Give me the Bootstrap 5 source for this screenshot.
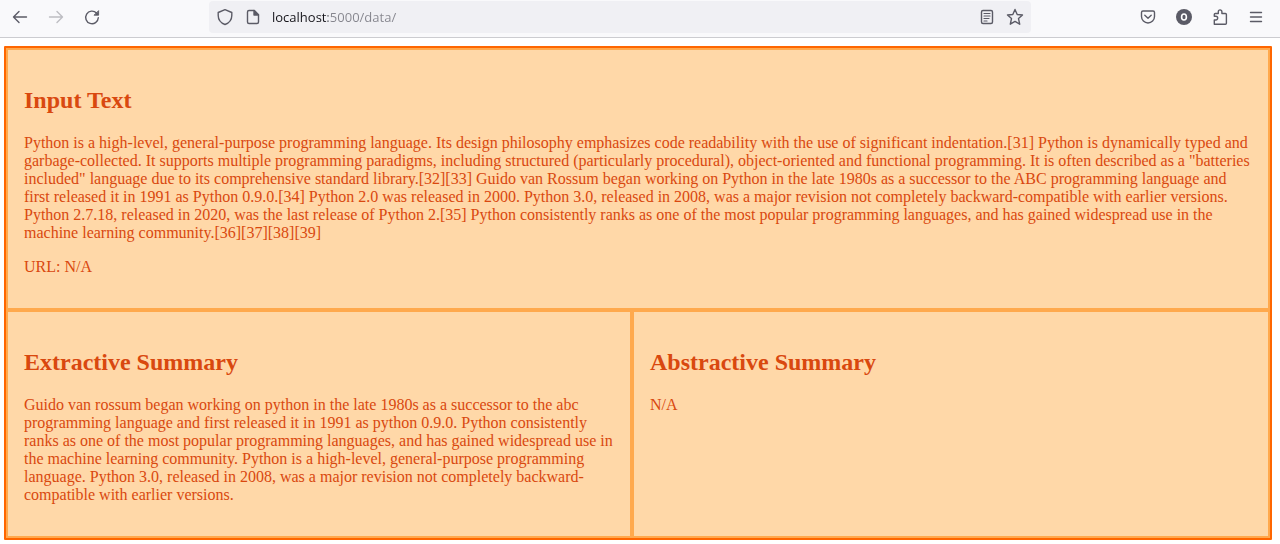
<!DOCTYPE html>
<html lang="en">
<head>
<meta charset="utf-8">
<meta name="viewport" content="width=device-width, initial-scale=1">
<title>Summary data</title>
<link href="https://cdn.jsdelivr.net/npm/bootstrap@5.3.0/dist/css/bootstrap.min.css" rel="stylesheet">
<style>
  body { background: #fff; }
  .toolbar { height: 38px; background: #f9f9fb; border-bottom: 1px solid #ccccd0; padding: 0 15px 3px 11px; }
  .tool { width: 18px; height: 18px; padding: 0; border: 0; background: none; color: #5b5b66; display: flex; flex: none; }
  .tool:disabled { color: #bdbdc2; }
  .tool svg { width: 18px; height: 18px; fill: none; stroke: currentColor; stroke-width: 1.4; stroke-linecap: round; stroke-linejoin: round; }
  .tool-group { gap: 18px; }
  .address { width: 822px; height: 32px; background: #f0f0f4; border-radius: 4px; padding: 0 7px; gap: 10px; }
  /* host in black, port and path in grey */
  .address-input { border: 0; outline: 0; padding: 0; min-width: 0; font: 13px/20px "Open Sans", sans-serif;
    background: linear-gradient(90deg, #15141a 56px, #85858d 56px); -webkit-background-clip: text; background-clip: text; color: transparent; }
  .panels { grid-template-columns: 313fr 319fr; margin: 8px 8px 4px 4px; border: 2px solid #ff6600; border-radius: 1px; background: #ffd8a8;
    color: #d9480f; font: 16px/18px "Liberation Serif", serif; }
  .panel { border: 2px solid #ffa94d; padding: 16px; }
  .panel-wide { grid-column: 1 / -1; }
  .panel h2 { font-size: 24px; line-height: 28px; font-weight: 700; margin: 20px 0; }
  .panel p { margin: 0 0 16px; }
</style>
</head>
<body>
<header class="toolbar d-flex align-items-center justify-content-between">
  <nav class="tool-group d-flex" aria-label="History">
    <button class="tool" type="button" aria-label="Back"><svg viewBox="0 0 18 18"><path d="M15.500 9H2.500M8 3.500 2.500 9 8 14.500"/></svg></button>
    <button class="tool" type="button" aria-label="Forward" disabled><svg viewBox="0 0 18 18"><path d="M2.500 9h13M10 3.500 15.500 9 10 14.500"/></svg></button>
    <button class="tool" type="button" aria-label="Reload"><svg viewBox="0 0 18 18"><path d="M13.500 5A6.300 6.300 0 1 0 15.300 9.800"/><path d="M15.600 3v4.200h-4.200z" fill="currentColor" stroke-width=".9"/></svg></button>
  </nav>
  <div class="address d-flex align-items-center">
    <button class="tool" type="button" aria-label="Site protection"><svg viewBox="0 0 18 18"><path d="M9 1.700 15.800 4.500v3c0 4-2.800 7.500-6.800 9-4-1.500-6.800-5-6.800-9v-3z"/></svg></button>
    <button class="tool" type="button" aria-label="Site information"><svg viewBox="0 0 18 18"><path d="M5 2.500h5.300l4.200 4.200v7.300q0 1.500-1.500 1.500H5Q3.500 15.500 3.500 14V4q0-1.500 1.500-1.500z"/><path d="M10 2.500v4.500h4.500z" fill="currentColor"/></svg></button>
    <input class="address-input flex-grow-1" type="text" aria-label="Address" value="localhost:5000/data/">
    <button class="tool" type="button" aria-label="Reader view"><svg viewBox="0 0 18 18"><rect x="3.500" y="2.500" width="11" height="13" rx="1.500"/><path d="M6 5.500h6M6 8h6M6 10.500h5M6 13h3" stroke-width="1.200"/></svg></button>
    <button class="tool" type="button" aria-label="Bookmark"><svg viewBox="0 0 18 18"><path d="m9 1.500 2.200 5 5.300.5-4 3.600 1.200 5.600L9 13.400l-4.700 2.800 1.200-5.600-4-3.600 5.300-.5z"/></svg></button>
  </div>
  <div class="tool-group d-flex">
    <button class="tool" type="button" aria-label="Save to Pocket"><svg viewBox="0 0 18 18"><path d="M4 3h10q1.500 0 1.500 1.500V8.500a6.500 6.500 0 0 1-13 0V4.500Q2.500 3 4 3zM5.800 7.200 9 10.200l3.200-3"/></svg></button>
    <button class="tool" type="button" aria-label="Account"><svg viewBox="0 0 18 18"><circle cx="9" cy="9" r="8" fill="currentColor" stroke="none"/><ellipse cx="9" cy="9" rx="2.400" ry="3" stroke="#fff" stroke-width="1.600"/></svg></button>
    <button class="tool" type="button" aria-label="Extensions"><svg viewBox="0 0 18 18"><path d="M3.300 16.300V12h1.500a1.900 1.900 0 0 0 0-3.800H3.300V6.500q0-1 1-1h3V3.700a1.800 1.800 0 0 1 3.600 0v1.800h3.500q1 0 1 1v8.800q0 1-1 1z"/></svg></button>
    <button class="tool" type="button" aria-label="Menu"><svg viewBox="0 0 18 18"><path d="M3.500 4.500h11M3.500 9h11M3.500 13.500h11"/></svg></button>
  </div>
</header>
<main class="panels d-grid">
  <section class="panel panel-wide">
    <h2>Input Text</h2>
    <p>Python is a high-level, general-purpose programming language. Its design philosophy emphasizes code readability with the use of significant indentation.[31] Python is dynamically typed and garbage-collected. It supports multiple programming paradigms, including structured (particularly procedural), object-oriented and functional programming. It is often described as a "batteries included" language due to its comprehensive standard library.[32][33] Guido van Rossum began working on Python in the late 1980s as a successor to the ABC programming language and first released it in 1991 as Python 0.9.0.[34] Python 2.0 was released in 2000. Python 3.0, released in 2008, was a major revision not completely backward-compatible with earlier versions. Python 2.7.18, released in 2020, was the last release of Python 2.[35] Python consistently ranks as one of the most popular programming languages, and has gained widespread use in the machine learning community.[36][37][38][39]</p>
    <p>URL: N/A</p>
  </section>
  <section class="panel">
    <h2>Extractive Summary</h2>
    <p>Guido van rossum began working on python in the late 1980s as a successor to the abc programming language and first released it in 1991 as python 0.9.0. Python consistently ranks as one of the most popular programming languages, and has gained widespread use in the machine learning community. Python is a high-level, general-purpose programming language. Python 3.0, released in 2008, was a major revision not completely backward-compatible with earlier versions.</p>
  </section>
  <section class="panel">
    <h2>Abstractive Summary</h2>
    <p>N/A</p>
  </section>
</main>
<script src="https://cdn.jsdelivr.net/npm/bootstrap@5.3.0/dist/js/bootstrap.bundle.min.js"></script>
</body>
</html>
